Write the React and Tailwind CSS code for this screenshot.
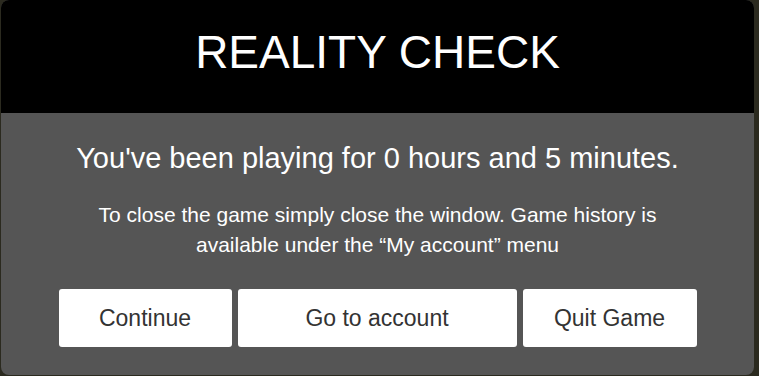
export default function App() {
  return (
    <div className="w-[759px] h-[376px] bg-[#2b2a1f] overflow-hidden" style={{ fontFamily: '"Liberation Sans", Arial, sans-serif' }}>
      <div className="ml-[1px] w-[753px] h-[375px] rounded-lg overflow-hidden flex flex-col bg-[#555555]">
        <div className="h-[113px] bg-black flex items-center justify-center">
          <h1 className="text-white text-[46px] leading-none -mt-[10px]">REALITY CHECK</h1>
        </div>
        <div className="flex-1 flex flex-col items-center">
          <p className="mt-[30px] text-white text-[29px] leading-[30px]">You've been playing for 0 hours and 5 minutes.</p>
          <p className="mt-[27px] text-white text-[21px] leading-[30px] text-center w-[590px]">
            To close the game simply close the window. Game history is available under the “My account” menu
          </p>
          <div className="mt-[29px] flex gap-[6px]">
            <button className="w-[173px] h-[58px] bg-white rounded-[3px] text-[#333] text-[23px]">Continue</button>
            <button className="w-[279px] h-[58px] bg-white rounded-[3px] text-[#333] text-[23px]">Go to account</button>
            <button className="w-[174px] h-[58px] bg-white rounded-[3px] text-[#333] text-[23px]">Quit Game</button>
          </div>
        </div>
      </div>
    </div>
  );
}
